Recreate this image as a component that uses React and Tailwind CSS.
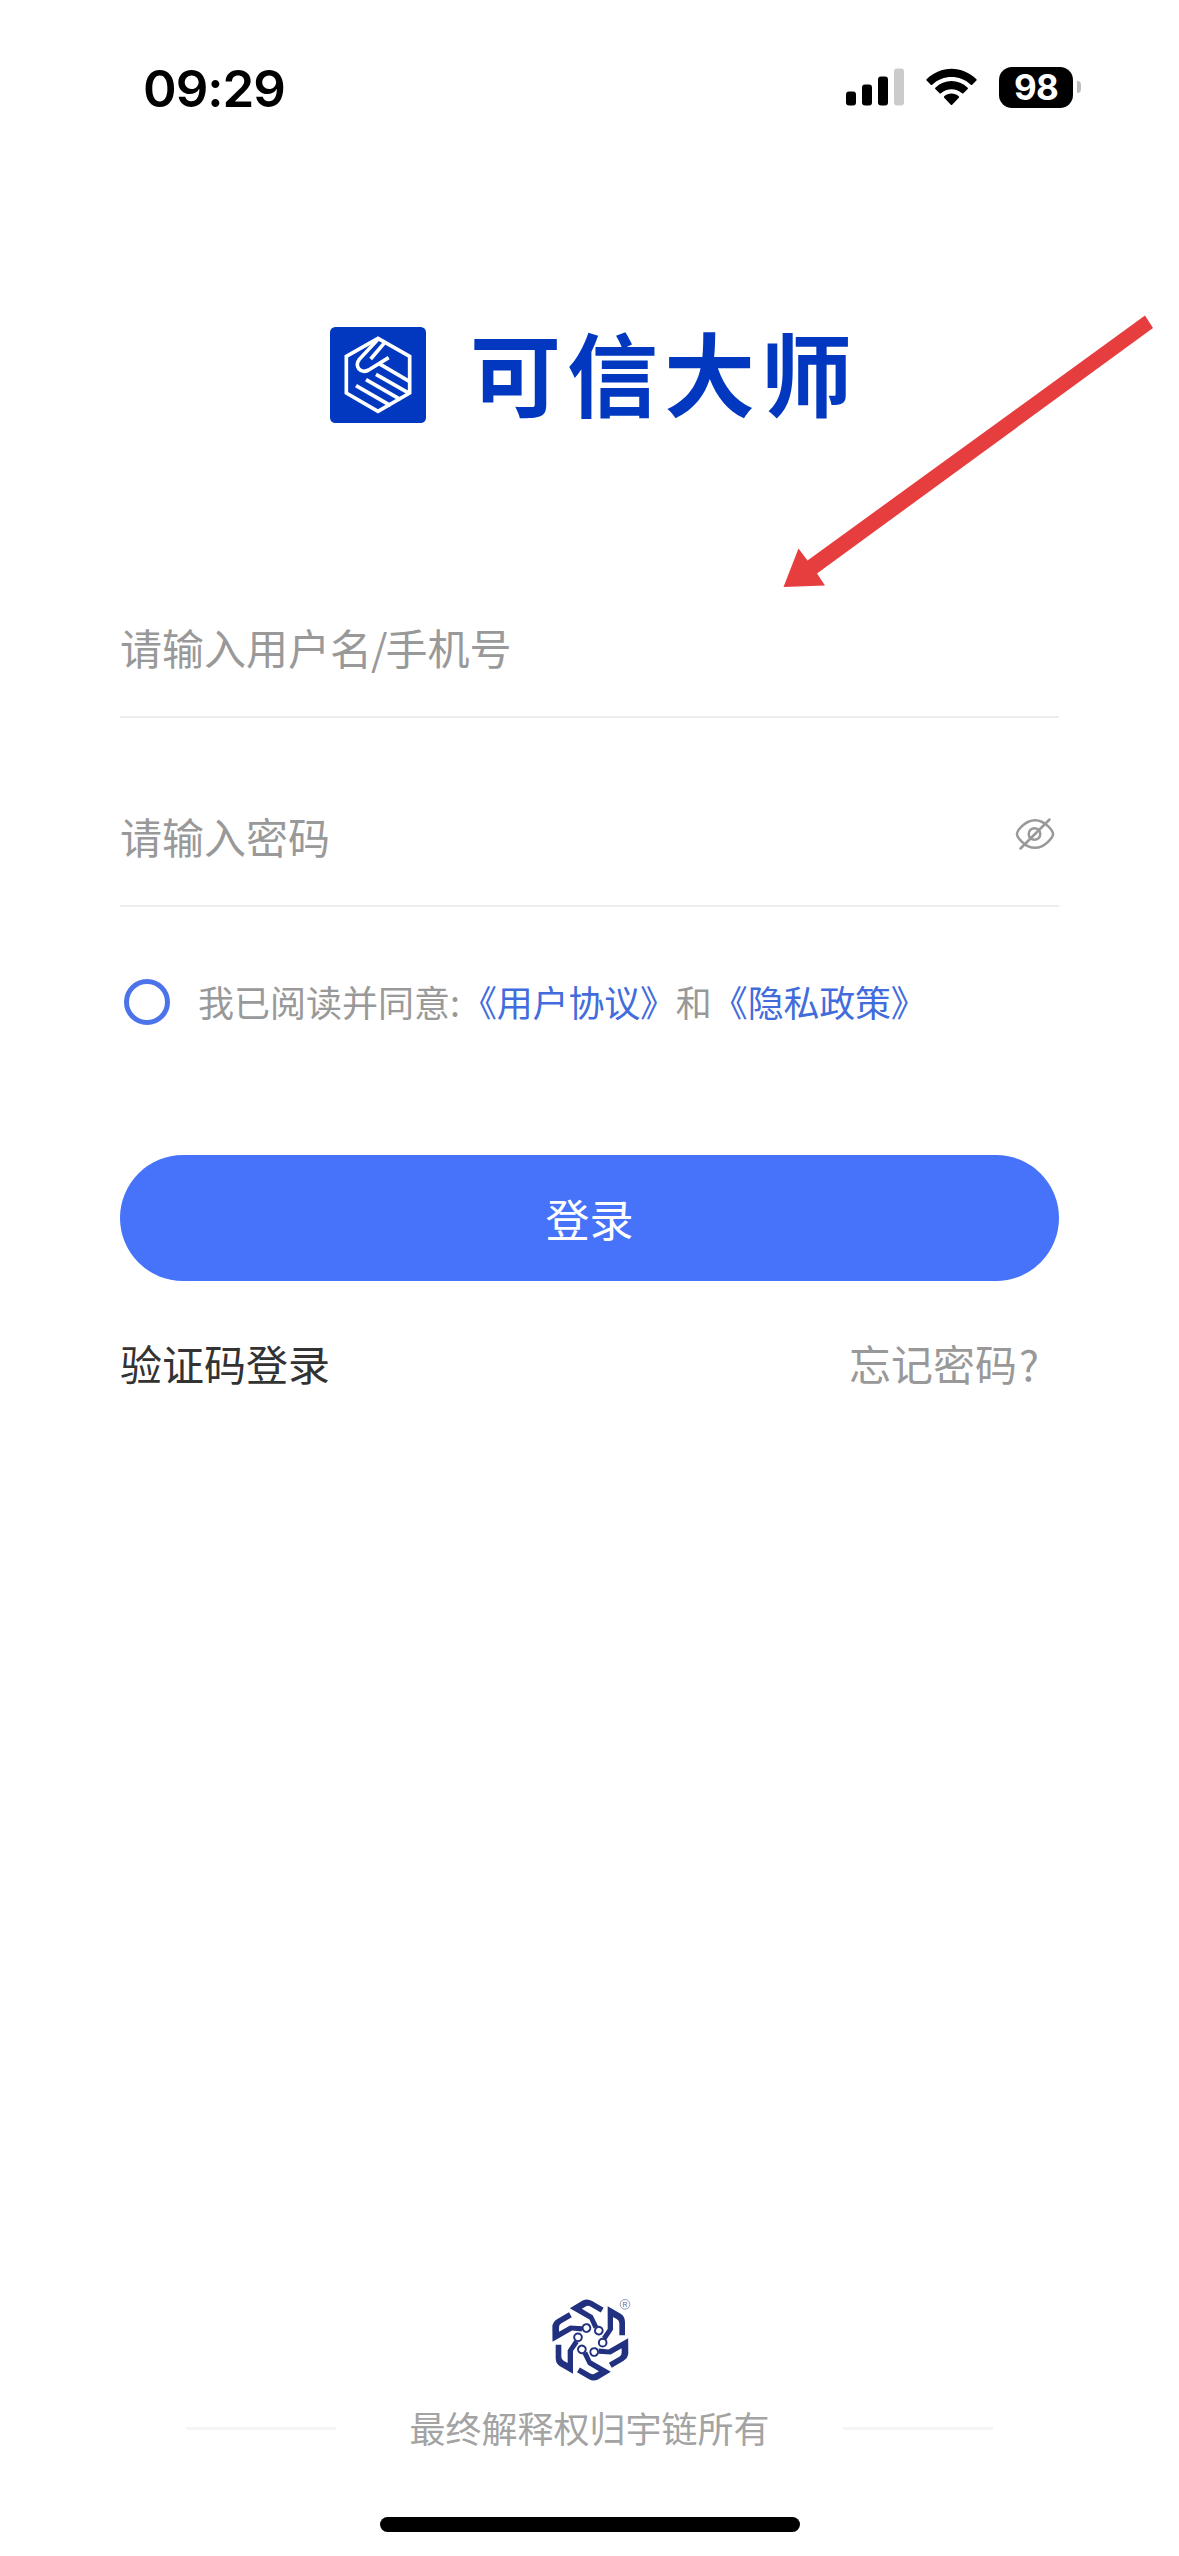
import React from "react";

const CJK = "font-['Noto_Sans_CJK_SC',sans-serif]";

function StatusBar() {
  return (
    <header className="flex h-[176px] items-start justify-between pl-[143px] pr-[98px] pt-[66px] text-black">
      <div className="font-['Inter',sans-serif] text-[51px] leading-[45px] font-semibold tracking-[-1px]">09:29</div>
      <div className="flex h-[42px] items-center">
        <svg className="h-[38px] w-[58px]" viewBox="0 0 58 38">
          <rect x="0" y="23.500" width="10" height="14" rx="3" />
          <rect x="16" y="16.500" width="10" height="21" rx="3" />
          <rect x="32" y="8.500" width="10" height="29" rx="3" />
          <rect x="48" y="0.500" width="10" height="37" rx="3" fill="#cbcbcb" />
        </svg>
        <svg className="ml-[22px] h-[38px] w-[51px]" viewBox="0 0 51 38">
          <path d="M0.600 11.200C14.500-2.900 36.500-2.900 50.400 11.200Q51 11.900 50.400 12.600L46.200 16.700Q45.500 17.300 44.800 16.700C34 6.400 17 6.400 6.200 16.700Q5.500 17.300 4.800 16.700L0.600 12.600Q0 11.900 0.600 11.200Z" />
          <path d="M9.300 19.700C18.400 10.800 32.600 10.800 41.700 19.700Q42.300 20.400 41.700 21.100L37.400 25.300Q36.700 25.900 36 25.300C30 19.800 21 19.800 15 25.300Q14.300 25.900 13.600 25.300L9.300 21.100Q8.700 20.400 9.300 19.700Z" />
          <path d="M18.200 28.300C22.400 24.700 28.600 24.700 32.800 28.300Q33.500 29 32.800 29.700L26.200 36.700Q25.500 37.300 24.800 36.700L18.200 29.700Q17.500 29 18.200 28.300Z" />
        </svg>
        <div className="ml-[22px] flex h-[41px] w-[74px] items-center justify-center rounded-[13px] bg-black font-['Inter',sans-serif] text-[35px] leading-none font-bold tracking-[-0.8px] text-white">98</div>
        <div className="ml-[4px] h-[12px] w-[4px] rounded-r-full bg-[#bdbdbd]" />
      </div>
    </header>
  );
}

function HandshakeLogo() {
  return (
    <svg className="h-[96px] w-[96px]" viewBox="60 51 288 288">
      <rect x="60" y="51" width="288" height="288" rx="16" fill="#0238c0" />
      <g fill="none" stroke="#fff" strokeWidth="11">
        <path d="M204 85L299 139V249L204 304L109 249V139Z" />
        <path d="M204 88L148 148Q136 164 147 177Q158 189 176 180L236 143" />
        <path d="M224 98L182 147" />
        <path d="M206 160L298 214" />
        <path d="M198 193L294 248" />
        <path d="M168 209L272 269" />
        <path d="M138 227L242 287" />
      </g>
    </svg>
  );
}

function ChainLogo() {
  const arms = [0, 60, 120, 180, 240, 300];
  return (
    <svg className="h-[120px] w-[140px]" viewBox="0 0 420 360">
      {arms.map((angle) => (
        <g key={angle} transform={`rotate(${angle} 211 180)`} stroke="#21307f" fill="none">
          <path d="M263 79L302 101Q315 109 315 126V166H298V130Q298 121 290 117L279 111V149L259 179L246 171L263 147Z" fill="#21307f" stroke="none" />
          <circle cx="248" cy="188" r="11.500" strokeWidth="6" />
        </g>
      ))}
      <circle cx="315" cy="73" r="14.500" fill="none" stroke="#7d88b5" strokeWidth="2.500" />
      <text x="315" y="80.500" textAnchor="middle" fontSize="21" fontFamily="Liberation Sans, sans-serif" fill="#56639a">R</text>
    </svg>
  );
}

function EyeOffIcon() {
  return (
    <svg className="h-[34px] w-[40px]" viewBox="0 0 40 34" fill="none" stroke="#999" strokeWidth="2.500" strokeLinecap="round">
      <path d="M2 17C1.800 14.500 9.500 3.200 20 3.200S38.200 14.500 38 17C38.200 19.500 30.500 30.800 20 30.800S1.800 19.500 2 17Z" />
      <circle cx="19.500" cy="17" r="5.800" />
      <path d="M5.500 31.500L34.500 2.500" />
    </svg>
  );
}

function Field({ placeholder, icon, className }) {
  return (
    <div className={`flex items-start justify-between border-b-2 border-[#ededed] ${className}`}>
      <span className="text-[42px] leading-[60px] text-[#999]">{placeholder}</span>
      {icon}
    </div>
  );
}

function PointerArrow() {
  return (
    <svg className="pointer-events-none absolute left-[780px] top-[310px] h-[284px] w-[380px]" viewBox="780 310 380 284">
      <path fill="#e63d3e" d="M1145 315.500L1153 328L817 573.500L825 585.500L783.500 587L798.500 548.500L807.500 560.500Z" />
    </svg>
  );
}

export default function App() {
  return (
    <div className={`relative flex h-[2556px] w-[1179px] flex-col overflow-hidden bg-white ${CJK}`}>
      <StatusBar />

      <div className="flex h-[398px] items-start pl-[330px] pt-[151px]">
        <HandshakeLogo />
        <h1 className="-mt-[5px] ml-[44px] whitespace-nowrap text-[91px] leading-[96px] font-bold tracking-[6px] text-[#0238c0]">可信大师</h1>
      </div>

      <main className="mx-[120px] flex flex-col">
        <Field
          className="h-[144px] pt-[43px]"
          placeholder={<>请输入用户名<span className="-mr-[2px] -ml-[1px]">/</span>手机号</>}
        />
        <Field className="h-[189px] pt-[88px]" placeholder="请输入密码" icon={<span className="mr-[4px] mt-[11px]"><EyeOffIcon /></span>} />

        <div className="mt-[65px] flex h-[60px] items-center">
          <span className="ml-[4px] h-[46px] w-[46px] rounded-full border-[5px] border-[#4b74ea]" />
          <p className="-mt-[2px] ml-[28px] flex whitespace-nowrap text-[36px] leading-[60px] text-[#999]">
            <span>我已阅读并同意</span>
            <span className="w-[11px]">:</span>
            <a className="tracking-[-0.2px] text-[#426cdc]">《用户协议》</a>
            <span>和</span>
            <a className="tracking-[-0.2px] text-[#426cdc]">《隐私政策》</a>
          </p>
        </div>

        <button className="mt-[123px] h-[126px] rounded-full bg-[#4673f9] text-center text-[44px] leading-[124px] text-white">登录</button>

        <div className="mt-[52px] flex justify-between pr-[20px] text-[42px] leading-[60px]">
          <a className="text-[#333]">验证码登录</a>
          <a className="text-[#999]">忘记密码<span className="ml-[2px]">?</span></a>
        </div>
      </main>

      <footer className="mt-auto flex flex-col items-center">
        <ChainLogo />
        <div className="flex items-center text-[36px] leading-[60px] text-[#a3a3a3]">
          <span className="h-[3px] w-[150px] bg-[#f5f5f5]" />
          <span className="-mt-[3px] mx-[73px]">最终解释权归宇链所有</span>
          <span className="h-[3px] w-[150px] bg-[#f5f5f5]" />
        </div>
        <div className="mb-[24px] mt-[60px] h-[15px] w-[420px] rounded-full bg-black" />
      </footer>

      <PointerArrow />
    </div>
  );
}
